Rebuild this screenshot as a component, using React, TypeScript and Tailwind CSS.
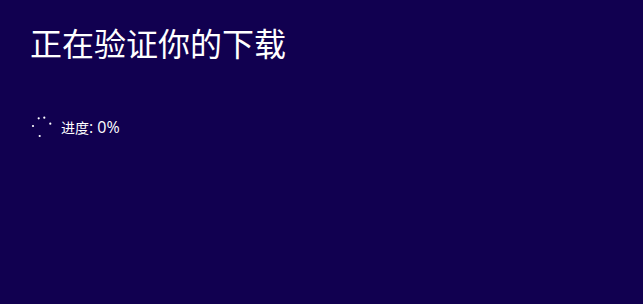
function Spinner() {
  const dots = [
    { cx: 2, cy: 9 },
    { cx: 7.7, cy: 1.3 },
    { cx: 13.3, cy: 0.7 },
    { cx: 19.3, cy: 6.7 },
    { cx: 8.7, cy: 19 },
  ];
  return (
    <svg width="22" height="22" viewBox="-1 -1 22 22" className="shrink-0">
      {dots.map((d, i) => (
        <circle key={i} cx={d.cx} cy={d.cy} r="1.1" fill="#ffffff" />
      ))}
    </svg>
  );
}

export default function App() {
  return (
    <div
      className="w-[643px] h-[304px] bg-[#110050] text-white overflow-hidden"
      style={{ fontFamily: '"Open Sans", "Noto Sans CJK SC", sans-serif' }}
    >
      <div className="pl-[30px] pt-[24px]">
        <h1 className="text-[32px] leading-[40px] font-normal">正在验证你的下载</h1>
        <div className="mt-[52px] flex items-center gap-[9px]">
          <Spinner />
          <span className="text-[14px] leading-[18px]">
            进度<span className="text-[16px]">: 0%</span>
          </span>
        </div>
      </div>
    </div>
  );
}
